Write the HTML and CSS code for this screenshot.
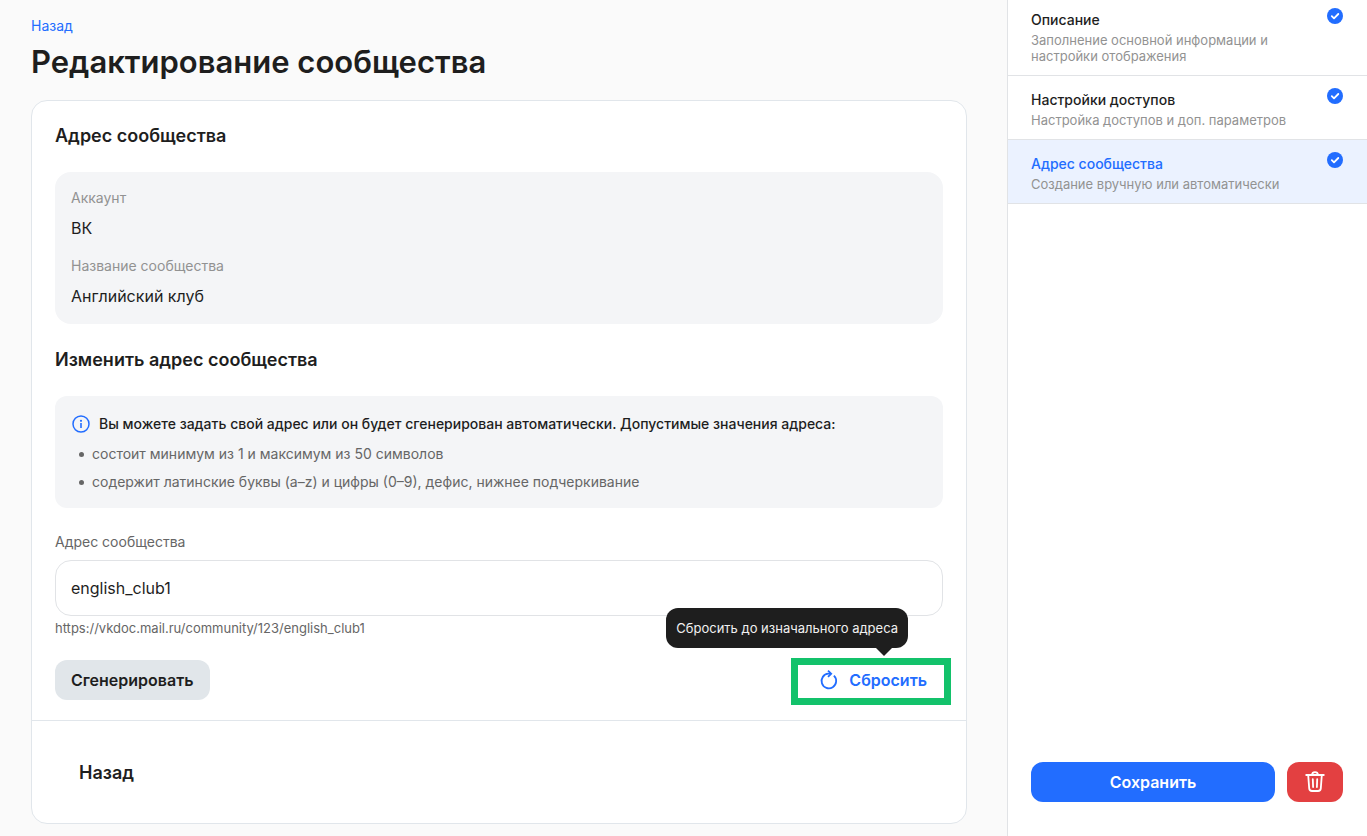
FILE: index.html
```
<!DOCTYPE html>
<html lang="ru">
<head>
  <meta charset="UTF-8">
  <meta name="viewport" content="width=device-width, initial-scale=1.0">
  <title>Редактирование сообщества</title>
  <link rel="stylesheet" href="styles.css">
</head>
<body>
  <div class="page">
    <main class="main">
      <a class="back-link" href="#">Назад</a>
      <h1 class="page-title">Редактирование сообщества</h1>

      <div class="card">
        <form class="card-body" id="address-form">
          <h2 class="section-title">Адрес сообщества</h2>

          <dl class="summary">
            <dt>Аккаунт</dt>
            <dd>ВК</dd>
            <dt>Название сообщества</dt>
            <dd>Английский клуб</dd>
          </dl>

          <h2 class="section-title">Изменить адрес сообщества</h2>

          <div class="hint">
            <p class="hint-title">
              <svg class="hint-icon" width="20" height="20" viewBox="0 0 20 20" fill="none" aria-hidden="true">
                <circle cx="10" cy="10" r="8" stroke="currentColor" stroke-width="1.5"/>
                <circle cx="10" cy="6.8" r="1.1" fill="currentColor"/>
                <path d="M10 9v5" stroke="currentColor" stroke-width="1.6"/>
              </svg>
              Вы можете задать свой адрес или он будет сгенерирован автоматически. Допустимые значения адреса:
            </p>
            <ul class="hint-list">
              <li>состоит минимум из 1 и максимум из 50 символов</li>
              <li>содержит латинские буквы (a–z) и цифры (0–9), дефис, нижнее подчеркивание</li>
            </ul>
          </div>

          <div class="field">
            <label class="field-label" for="address">Адрес сообщества</label>
            <input class="field-input" type="text" id="address" value="english_club1">
            <p class="field-note">https://vkdoc.mail.ru/community/123/english_club1</p>
          </div>

          <div class="actions">
            <button class="btn btn-secondary" type="button">Сгенерировать</button>
            <div class="reset">
              <button class="btn btn-reset" type="button" aria-describedby="reset-tip">
                <svg width="24" height="24" viewBox="0 0 24 24" fill="none" stroke="currentColor" stroke-width="1.8" aria-hidden="true">
                  <path d="M16.9 7.7A7.3 7.3 0 1 1 11.4 5.7H14"/>
                  <path d="M11 2.6 14.2 5.7 11 8.8"/>
                </svg>
                Сбросить
              </button>
              <span class="tooltip" role="tooltip" id="reset-tip">Сбросить до изначального адреса</span>
            </div>
          </div>
        </form>

        <div class="card-footer">
          <button class="btn btn-plain" type="button">Назад</button>
        </div>
      </div>
    </main>

    <aside class="sidebar">
      <nav class="steps">
        <a class="step" href="#">
          <span class="step-text">
            <span class="step-title">Описание</span>
            <span class="step-note">Заполнение основной информации и настройки отображения</span>
          </span>
          <svg class="step-check" width="16" height="16" viewBox="0 0 16 16" fill="none" aria-hidden="true">
            <circle cx="8" cy="8" r="8" fill="currentColor"/>
            <path d="M4.8 8.2l2.2 2.2 4.3-4.4" stroke="#fff" stroke-width="1.8" stroke-linecap="round" stroke-linejoin="round"/>
          </svg>
        </a>
        <a class="step" href="#">
          <span class="step-text">
            <span class="step-title">Настройки доступов</span>
            <span class="step-note">Настройка доступов и доп. параметров</span>
          </span>
          <svg class="step-check" width="16" height="16" viewBox="0 0 16 16" fill="none" aria-hidden="true">
            <circle cx="8" cy="8" r="8" fill="currentColor"/>
            <path d="M4.8 8.2l2.2 2.2 4.3-4.4" stroke="#fff" stroke-width="1.8" stroke-linecap="round" stroke-linejoin="round"/>
          </svg>
        </a>
        <a class="step active" href="#" aria-current="step">
          <span class="step-text">
            <span class="step-title">Адрес сообщества</span>
            <span class="step-note">Создание вручную или автоматически</span>
          </span>
          <svg class="step-check" width="16" height="16" viewBox="0 0 16 16" fill="none" aria-hidden="true">
            <circle cx="8" cy="8" r="8" fill="currentColor"/>
            <path d="M4.8 8.2l2.2 2.2 4.3-4.4" stroke="#fff" stroke-width="1.8" stroke-linecap="round" stroke-linejoin="round"/>
          </svg>
        </a>
      </nav>

      <div class="sidebar-actions">
        <button class="btn btn-primary" type="submit" form="address-form">Сохранить</button>
        <button class="btn btn-danger" type="button" aria-label="Удалить">
          <svg width="24" height="24" viewBox="0 0 24 24" fill="none" stroke="currentColor" stroke-width="1.8" stroke-linecap="round" stroke-linejoin="round" aria-hidden="true">
            <path d="M3.2 5h17.6"/>
            <path d="M9 4.8C9.2 3 10.2 2.2 12 2.2S14.8 3 15 4.8"/>
            <path d="M5.2 5.2l1 13.2q.2 2.6 2.8 2.6h6q2.6 0 2.8-2.6l1-13.2"/>
            <path d="M9.8 9.2l.3 7.8M14.2 9.2l-.3 7.8"/>
          </svg>
        </button>
      </div>
    </aside>
  </div>
</body>
</html>
```
FILE: styles.css
```
* {
  box-sizing: border-box;
}

body {
  margin: 0;
  background-color: #fafafa;
  color: #1e1e1e;
  font-family: Inter, "Open Sans", sans-serif;
  font-size: 14px;
  line-height: 20px;
}

h1, h2, p, dl, dd, ul {
  margin: 0;
  padding: 0;
}

a {
  text-decoration: none;
}

.page {
  display: flex;
  min-height: 100vh;
}

.main {
  flex: 1;
  min-width: 0;
  padding: 16px 40px 12px 31px;
}

.back-link {
  display: block;
  width: fit-content;
  color: #226dff;
}

.page-title {
  margin: 4px 0 16px;
  font-size: 31px;
  font-weight: 600;
  line-height: 44px;
}

/* Card */

.card {
  border: 1px solid #e1e6eb;
  border-radius: 16px;
  background-color: #fff;
}

.card-body {
  display: flex;
  flex-direction: column;
  gap: 24px;
  padding: 23px 23px 20px;
}

.section-title {
  font-size: 18px;
  font-weight: 600;
  line-height: 24px;
}

.summary {
  padding: 16px;
  border-radius: 16px;
  background-color: #f4f5f7;
}

.summary dt {
  color: #929292;
}

.summary dd {
  margin-top: 8px;
  font-size: 16px;
  line-height: 24px;
}

.summary dd + dt {
  margin-top: 16px;
}

.hint {
  padding: 16px;
  border-radius: 12px;
  background-color: #f4f5f7;
}

.hint-title {
  display: flex;
  align-items: center;
  gap: 8px;
  font-weight: 500;
  line-height: 24px;
}

.hint-icon {
  flex-shrink: 0;
  color: #226dff;
}

.hint-list {
  padding-left: 8px;
  color: #666;
  list-style: none;
}

.hint-list li {
  display: flex;
  align-items: center;
  gap: 8px;
  margin-top: 8px;
}

.hint-list li::before {
  content: "";
  flex-shrink: 0;
  width: 5px;
  height: 5px;
  border-radius: 50%;
  background-color: #666;
}

.field {
  display: flex;
  flex-direction: column;
}

.field-label {
  margin-bottom: 8px;
  color: #666;
}

.field-input {
  width: 100%;
  height: 56px;
  padding: 0 15px;
  border: 1px solid #e1e3e6;
  border-radius: 16px;
  background-color: #fff;
  color: inherit;
  font-family: inherit;
  font-size: 16px;
}

.field-note {
  margin-top: 4px;
  color: #666;
  font-size: 13px;
  line-height: 16px;
}

.actions {
  display: flex;
  justify-content: space-between;
}

.card-footer {
  padding: 31px 23px;
  border-top: 1px solid #e1e6eb;
}

/* Buttons */

.btn {
  display: flex;
  align-items: center;
  justify-content: center;
  gap: 8px;
  height: 40px;
  padding: 0 16px;
  border: none;
  border-radius: 12px;
  color: inherit;
  font-family: inherit;
  font-size: 16px;
  font-weight: 600;
  cursor: pointer;
}

.btn-secondary {
  background-color: #e1e6ea;
}

.btn-reset {
  background: none;
  color: #226dff;
}

.btn-plain {
  padding: 0 24px;
  background: none;
  font-size: 18px;
}

.btn-primary {
  flex: 1;
  background-color: #226dff;
  color: #fff;
}

.btn-danger {
  width: 56px;
  background-color: #e34041;
  color: #fff;
}

/* Reset button with its frame and tooltip */

.reset {
  position: relative;
}

.reset::after {
  content: "";
  position: absolute;
  top: -2px;
  right: -8px;
  bottom: -5px;
  left: -10px;
  border: 7px solid #13c26b;
  pointer-events: none;
}

.tooltip {
  position: absolute;
  right: 35px;
  bottom: 52px;
  padding: 12px 10px;
  border-radius: 12px;
  background-color: #1e1e1e;
  color: #f0f0f0;
  font-size: 13px;
  line-height: 16px;
  white-space: nowrap;
}

.tooltip::after {
  content: "";
  position: absolute;
  top: 100%;
  right: 16px;
  border: 8px solid transparent;
  border-top-color: #1e1e1e;
  border-bottom: none;
}

/* Sidebar */

.sidebar {
  position: sticky;
  top: 0;
  display: flex;
  flex-direction: column;
  justify-content: space-between;
  width: 360px;
  height: 100vh;
  border-left: 1px solid #e1e3e6;
  background-color: #fff;
}

.step {
  display: flex;
  align-items: flex-start;
  justify-content: space-between;
  padding: 12px 24px 11px 23px;
  border-bottom: 1px solid #e1e3e6;
  color: inherit;
}

.step:first-child {
  padding-top: 8px;
}

.step-text {
  max-width: 260px;
  padding-top: 2px;
}

.step-title {
  display: block;
  font-weight: 500;
}

.step-note {
  display: block;
  margin-top: 2px;
  color: #929292;
  font-size: 13px;
  line-height: 16px;
}

.step-check {
  flex-shrink: 0;
  color: #226dff;
}

.step.active {
  background-color: #ebf2ff;
}

.step.active .step-title {
  color: #226dff;
}

.sidebar-actions {
  display: flex;
  gap: 12px;
  padding: 0 24px 34px 23px;
}
```
